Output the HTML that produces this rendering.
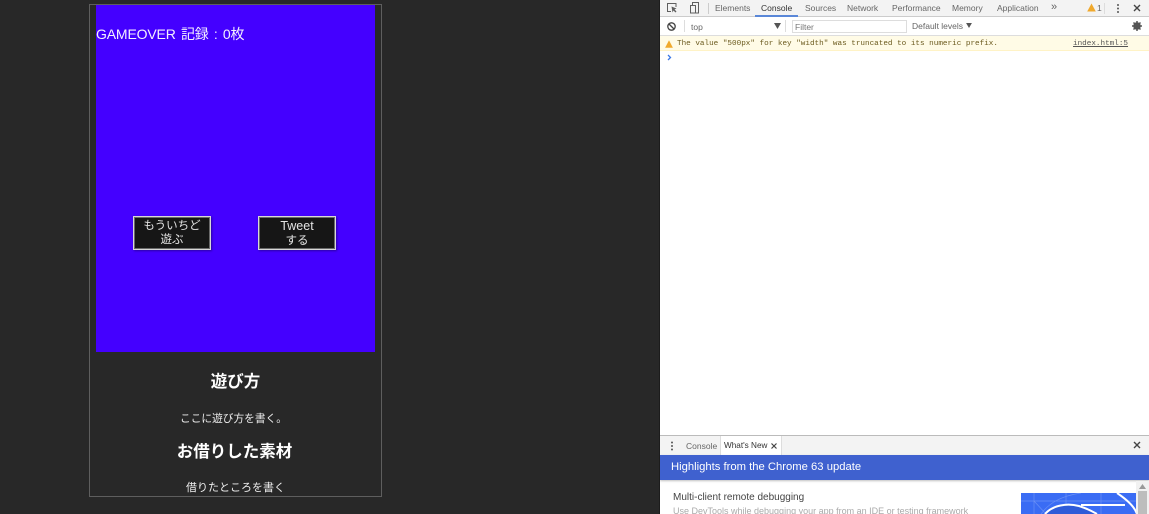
<!DOCTYPE html>
<html lang="ja">
<head>
<meta charset="utf-8">
<title>GAMEOVER</title>
<style>
html,body{margin:0;padding:0;width:1149px;height:514px;overflow:hidden;background:#282828;}
body{position:relative;font-family:"Liberation Sans","Noto Sans CJK JP",sans-serif;}
.a{position:absolute;white-space:nowrap;}
.c{text-align:center;}
.btn{position:absolute;top:216px;width:76px;height:32px;background:#161616;border:1px solid #d8d8d8;color:#e4e4e4;font-size:11.5px;line-height:14px;text-align:center;box-shadow:inset 0 0 0 1px #6a6a6a,1px 1px 2px rgba(0,0,0,.35);}
.btn div{padding-top:2px;}
.dt{color:#666;font-size:8.5px;line-height:12px;}
.m{font-family:'Liberation Mono',monospace;font-size:7.65px;line-height:12px;}
</style>
</head>
<body>
<div class="a" style="left:89px;top:4px;width:291px;height:491px;border:1px solid #5e5e5e"></div>
<div class="a" style="left:96px;top:5px;width:279px;height:347px;background:#4400ff"></div>
<div class="a" style="left:96px;top:24px;color:#f4f0ff;font-size:14px;line-height:20px;letter-spacing:-.15px;word-spacing:1.5px">GAMEOVER 記録 : 0枚</div>
<div class="btn" style="left:133px"><div>もういちど<br>遊ぶ</div></div>
<div class="btn" style="left:258px"><div><span style="font-size:12.500px">Tweet</span><br>する</div></div>

<div class="a c" style="left:96px;width:279px;top:371px;color:#fff;font-size:16.500px;font-weight:700;line-height:22px">遊び方</div>
<div class="a c" style="left:94px;width:279px;top:410px;color:#eee;font-size:10.700px;line-height:18px">ここに遊び方を書く。</div>
<div class="a c" style="left:95px;width:279px;top:441px;color:#fff;font-size:16.500px;font-weight:700;line-height:22px">お借りした素材</div>
<div class="a c" style="left:96px;width:279px;top:479px;color:#eee;font-size:11px;line-height:18px">借りたところを書く</div>

<!-- DevTools -->
<div class="a" style="left:659px;top:0;width:1px;height:514px;background:#1c1c1c"></div>
<div class="a" style="left:660px;top:0;width:489px;height:514px;background:#fff;overflow:hidden;filter:blur(.3px)">
  <div class="a" style="left:0;top:0;width:489px;height:16px;background:#f3f3f3;border-bottom:1px solid #ccc"></div>
  <svg class="a" style="left:6px;top:2px" width="36" height="12" viewBox="0 0 36 12" fill="none" stroke="#5f5f5f" stroke-width="1">
    <path d="M5 9.500H1.500V1.500H10V5"/><path d="M5.500 4.500l5 2-2 1 2 2-1 1-2-2-1 2z" fill="#5f5f5f" stroke="none"/>
    <rect x="24.500" y="3.500" width="5" height="7.500"/><path d="M26.500 3V.5h6v10.500h-3"/>
  </svg>
  <div class="a" style="left:48px;top:3px;width:1px;height:11px;background:#ccc"></div>
  <div class="a dt" style="left:55px;top:2px">Elements</div>
  <div class="a dt" style="left:101px;top:2px;color:#333">Console</div>
  <div class="a" style="left:95px;top:15px;width:43px;height:2px;background:#5a87d8"></div>
  <div class="a dt" style="left:145px;top:2px">Sources</div>
  <div class="a dt" style="left:187px;top:2px">Network</div>
  <div class="a dt" style="left:232px;top:2px">Performance</div>
  <div class="a dt" style="left:292px;top:2px">Memory</div>
  <div class="a dt" style="left:337px;top:2px">Application</div>
  <div class="a dt" style="left:391px;top:1px;font-size:11px">»</div>
  <svg class="a" style="left:427px;top:3px" width="9" height="9" viewBox="0 0 9 9"><path d="M4.500 .5L8.800 8.500H.2z" fill="#f0a92d"/></svg>
  <div class="a dt" style="left:437px;top:2px">1</div>
  <div class="a" style="left:444px;top:3px;width:1px;height:11px;background:#ddd"></div>
  <svg class="a" style="left:456px;top:3px" width="4" height="11" viewBox="0 0 4 11" fill="#555"><circle cx="2" cy="2" r="1"/><circle cx="2" cy="5.500" r="1"/><circle cx="2" cy="9" r="1"/></svg>
  <svg class="a" style="left:473px;top:4px" width="8" height="8" viewBox="0 0 8 8" stroke="#444" stroke-width="1.400"><path d="M1 1l6 6M7 1L1 7"/></svg>

  <div class="a" style="left:0;top:17px;width:489px;height:18px;background:#fff;border-bottom:1px solid #ddd"></div>
  <svg class="a" style="left:7px;top:22px" width="9" height="9" viewBox="0 0 9 9" fill="none" stroke="#444" stroke-width="1.300"><circle cx="4.500" cy="4.500" r="3.700"/><path d="M2 2l5 5"/></svg>
  <div class="a" style="left:24px;top:20px;width:1px;height:12px;background:#ddd"></div>
  <div class="a dt" style="left:31px;top:21px">top</div>
  <svg class="a" style="left:114px;top:23px" width="7" height="6" viewBox="0 0 7 6"><path d="M0 0h7L3.500 6z" fill="#555"/></svg>
  <div class="a" style="left:125px;top:20px;width:1px;height:12px;background:#ddd"></div>
  <div class="a" style="left:132px;top:20px;width:113px;height:11px;border:1px solid #ddd"></div>
  <div class="a dt" style="left:135px;top:21px;color:#777">Filter</div>
  <div class="a dt" style="left:252px;top:20px">Default levels</div>
  <svg class="a" style="left:306px;top:23px" width="6" height="5" viewBox="0 0 7 6"><path d="M0 0h7L3.500 6z" fill="#555"/></svg>
  <svg class="a" style="left:472px;top:21px" width="10" height="10" viewBox="0 0 10 10"><circle cx="5" cy="5" r="2.800" fill="none" stroke="#555" stroke-width="2"/><path d="M5 0v10M0 5h10M1.500 1.500l7 7M8.500 1.500l-7 7" stroke="#555" stroke-width="1.500"/></svg>

  <div class="a" style="left:0;top:36px;width:489px;height:14px;background:#fffbe6;border-bottom:1px solid #fff3c6"></div>
  <svg class="a" style="left:5px;top:40px" width="8" height="8" viewBox="0 0 8 8"><path d="M4 .2L7.900 7.800H.1z" fill="#f0a92d"/></svg>
  <div class="a m" style="left:17px;top:38px;color:#6b5a1e">The value "500px" for key "width" was truncated to its numeric prefix.</div>
  <div class="a m" style="left:413px;top:38px;color:#555;text-decoration:underline">index.html:5</div>
  <svg class="a" style="left:7px;top:54px" width="5" height="7" viewBox="0 0 5 7" fill="none" stroke="#3b78e7" stroke-width="1.300"><path d="M1 1l2.500 2.500L1 6"/></svg>

  <div class="a" style="left:0;top:435px;width:489px;height:1px;background:#bbb"></div>
  <div class="a" style="left:0;top:436px;width:489px;height:19px;background:#f3f3f3"></div>
  <svg class="a" style="left:10px;top:441px" width="4" height="11" viewBox="0 0 4 11" fill="#555"><circle cx="2" cy="1.500" r="1"/><circle cx="2" cy="5" r="1"/><circle cx="2" cy="8.500" r="1"/></svg>
  <div class="a dt" style="left:26px;top:440px">Console</div>
  <div class="a" style="left:60px;top:436px;width:60px;height:19px;background:#fff;border-left:1px solid #ddd;border-right:1px solid #ddd"></div>
  <div class="a dt" style="left:64px;top:440px;color:#333;font-size:8.2px">What's New</div>
  <svg class="a" style="left:111px;top:443px" width="6" height="6" viewBox="0 0 6 6" stroke="#444" stroke-width="1.200"><path d="M.5 .5l5 5M5.500 .5l-5 5"/></svg>
  <svg class="a" style="left:473px;top:441px" width="8" height="8" viewBox="0 0 8 8" stroke="#444" stroke-width="1.400"><path d="M1 1l6 6M7 1L1 7"/></svg>

  <div class="a" style="left:0;top:455px;width:489px;height:25px;background:#3f61cf;box-shadow:0 1px 2px rgba(0,0,0,.25)"></div>
  <div class="a" style="left:11px;top:460px;color:#fff;font-size:11.250px;line-height:15px">Highlights from the Chrome 63 update</div>
  <div class="a" style="left:13px;top:491px;color:#444;font-size:10px;line-height:14px">Multi-client remote debugging</div>
  <div class="a" style="left:13px;top:505px;color:#aaa;font-size:9px;line-height:13px">Use DevTools while debugging your app from an IDE or testing framework</div>

  <svg class="a" style="left:361px;top:493px" width="116" height="21" viewBox="0 0 116 21">
    <rect width="116" height="21" fill="#3a6cf4"/>
    <path d="M0 8H116M13 0V21M45 0V21M80 0V21M13 8L25 21M60 0C40 3 28 10 20 21" stroke="#6a90f6" stroke-width=".7" fill="none"/>
    <path d="M24 21C32 12 46 10 58 13C70 17 74 20 76 21" fill="#2f5bd8" stroke="#fff" stroke-width="2"/>
    <path d="M60 12H104" stroke="#fff" stroke-width="2"/>
    <path d="M96 0C108 8 114 15 116 21" stroke="#fff" stroke-width="2" fill="none"/>
  </svg>
  <div class="a" style="left:476px;top:481px;width:13px;height:33px;background:#f1f1f1"></div>
  <svg class="a" style="left:479px;top:484px" width="7" height="5" viewBox="0 0 7 5"><path d="M0 5L3.500 0 7 5z" fill="#999"/></svg>
  <div class="a" style="left:478px;top:491px;width:9px;height:23px;background:#bdbdbd"></div>
</div>
</body>
</html>
